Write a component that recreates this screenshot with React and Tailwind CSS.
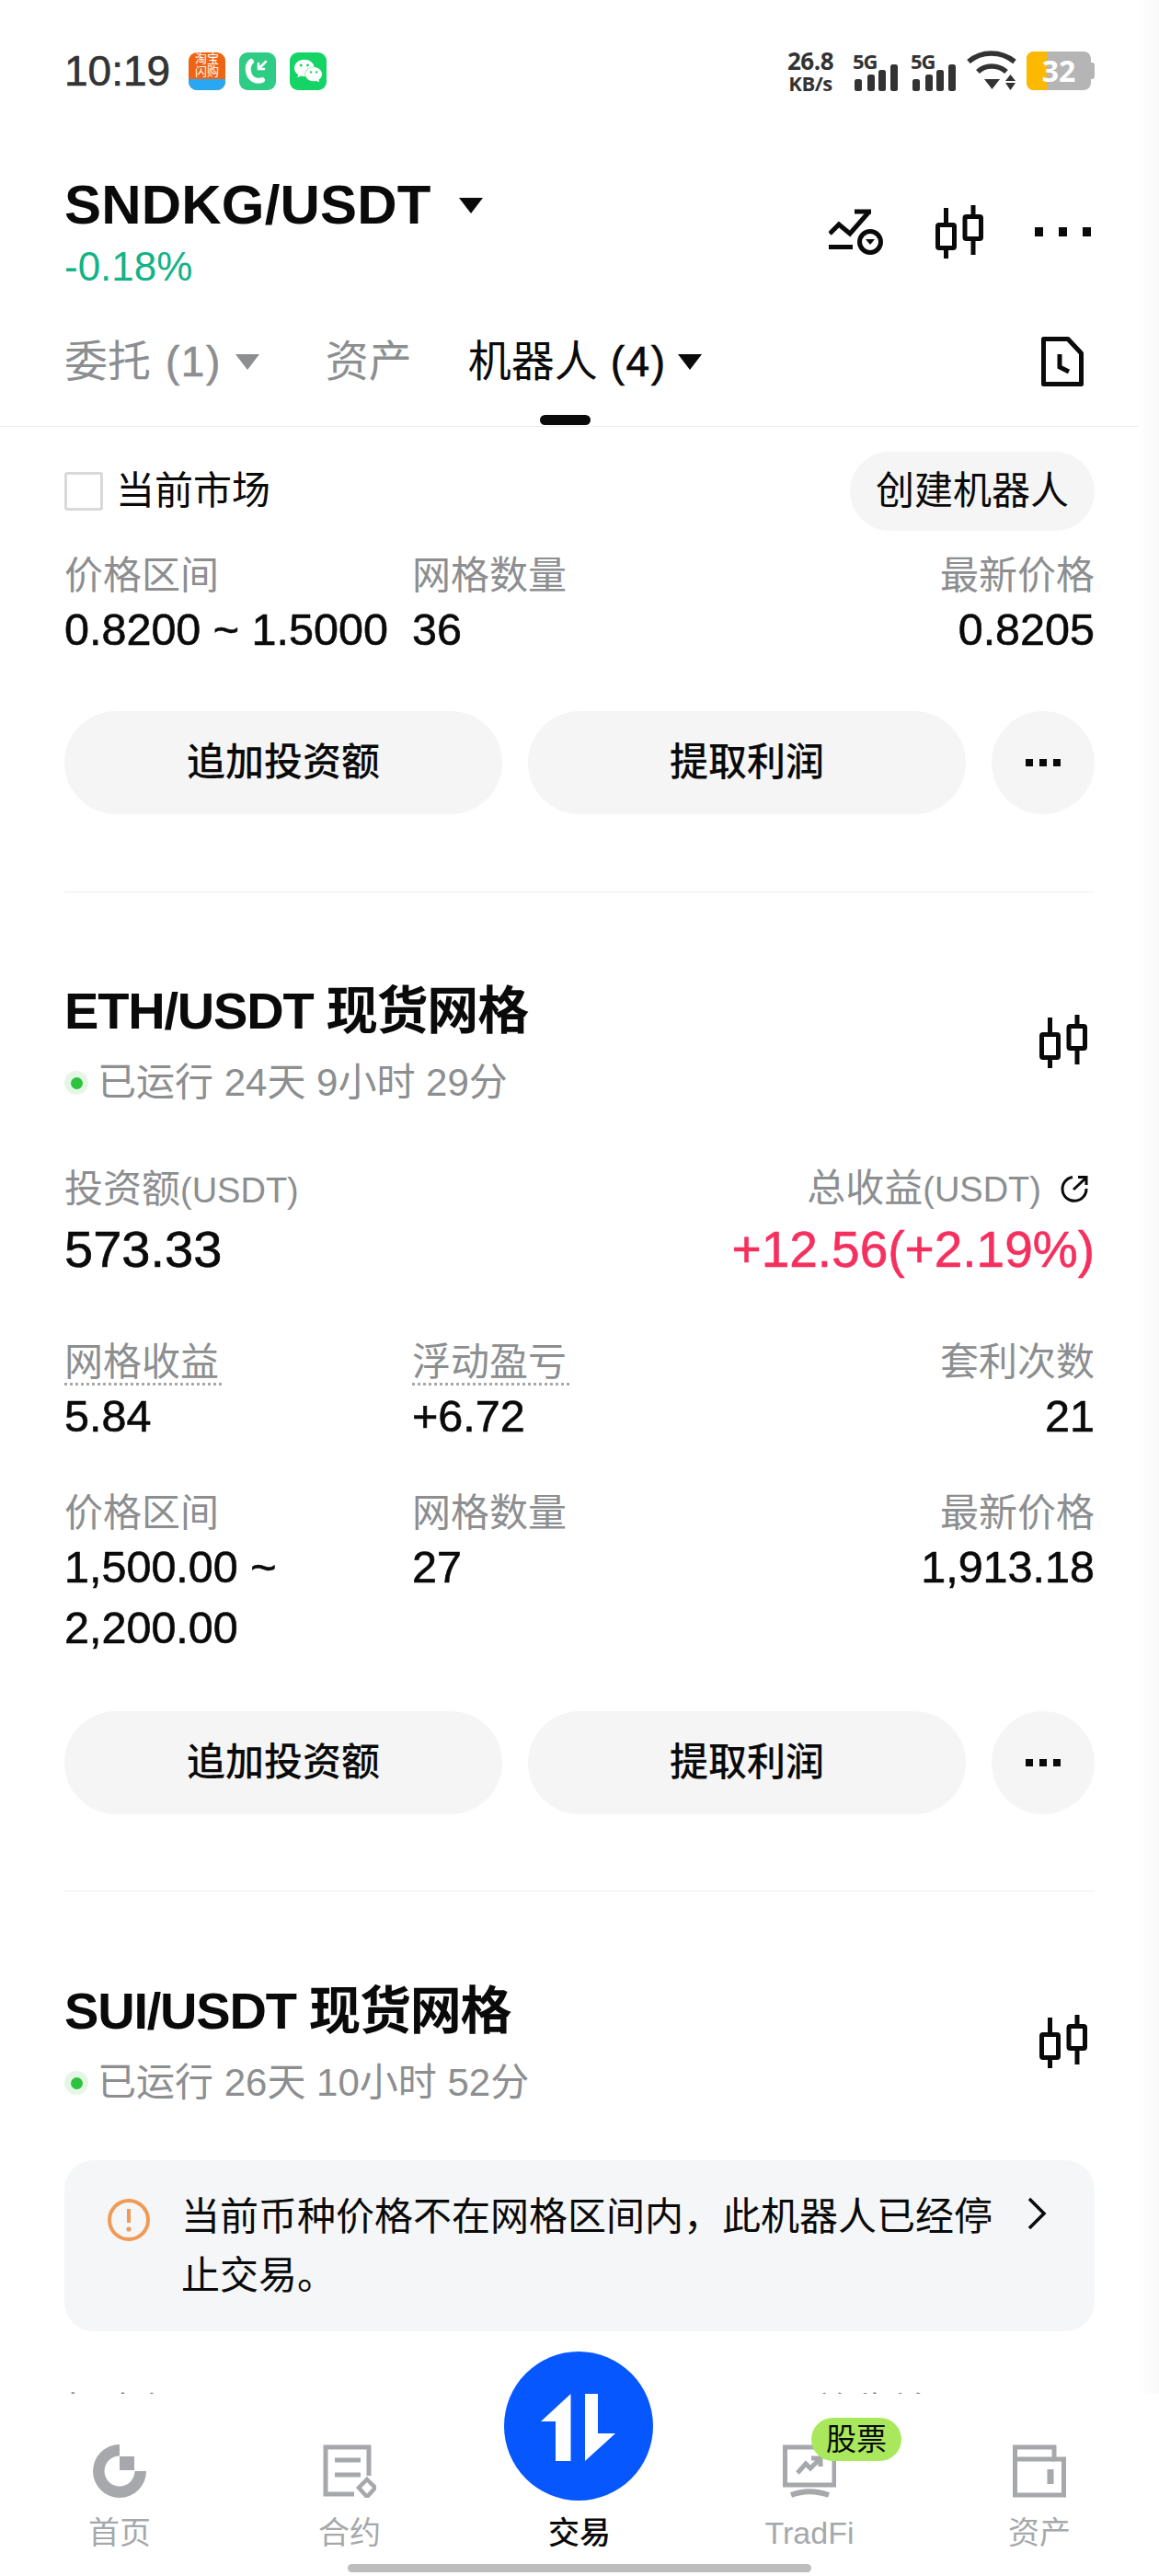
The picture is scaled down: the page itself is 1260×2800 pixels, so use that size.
import React from 'react';
import { SiWechat } from 'react-icons/si';

const FONT = "font-['Liberation_Sans','Noto_Sans_CJK_SC',sans-serif]";
// the reference's latin digits are a touch heavier than Liberation regular
const HEAVY = '[-webkit-text-stroke:0.6px_currentColor]';

function Candles({ className }) {
  return (
    <svg className={className} width="52" height="58" viewBox="0 0 52 58" fill="none" stroke="#0a0a0a" strokeWidth="5">
      <rect x="2.5" y="21.5" width="18" height="25" rx="1.5" />
      <path d="M11.5 3V19M11.5 49V58" />
      <rect x="32" y="12.5" width="17.5" height="24" rx="1.5" />
      <path d="M41 0V10M41 39V54" />
    </svg>
  );
}

function Dots() {
  return (
    <div className="flex gap-[7px]">
      <i className="block w-[8px] h-[8px] bg-[#0a0a0a]" />
      <i className="block w-[8px] h-[8px] bg-[#0a0a0a]" />
      <i className="block w-[8px] h-[8px] bg-[#0a0a0a]" />
    </div>
  );
}

function Signal() {
  return (
    <div className="relative w-[50px] h-[44px]">
      <span className="absolute left-0 top-0 text-[22px] leading-[22px] font-bold text-[#333] font-['Open_Sans',sans-serif] tracking-[-1px]">5G</span>
      <svg className="absolute left-[2px] top-0" width="48" height="44" viewBox="0 0 48 44" fill="#333">
        <rect x="0" y="31" width="8" height="13" rx="2.5" />
        <rect x="14" y="26" width="8" height="18" rx="2.5" />
        <rect x="26" y="21" width="8" height="23" rx="2.5" />
        <rect x="39" y="15" width="8" height="29" rx="2.5" />
      </svg>
    </div>
  );
}

function StatusBar() {
  return (
    <div className="h-[154px] px-[70px] flex items-center justify-between">
      <div className="flex items-center">
        <span className={`text-[46px] leading-[46px] text-[#333] w-[135px] ${HEAVY}`}>10:19</span>
        <div className="w-[40px] h-[41px] rounded-[9px] overflow-hidden flex flex-col bg-[#ee6414]">
          <div className="h-[29px] text-[13px] leading-[14px] text-white text-center">淘宝<br />闪购</div>
          <div className="flex-1 bg-[#2aa7f2]" />
        </div>
        <div className="ml-[15px] w-[40px] h-[41px] rounded-[9px] bg-[#2ecc84] flex items-center justify-center">
          <svg width="28" height="30" viewBox="0 0 28 30" fill="none" stroke="#fff" strokeLinecap="round">
            <path d="M7 5C2 9 3 20 9 24c3 2 7 2 10 1" strokeWidth="6" />
            <path d="M23 5L15 13M15 7V13H21" strokeWidth="2.5" />
          </svg>
        </div>
        <div className="ml-[15px] w-[40px] h-[41px] rounded-[9px] bg-[#14d465] flex items-center justify-center">
          <SiWechat className="text-white text-[30px]" />
        </div>
      </div>
      <div className="flex items-center">
        <div className="text-center text-[#333] font-bold font-['Open_Sans',sans-serif]">
          <div className="text-[26px] leading-[26px] tracking-[-0.5px]">26.8</div>
          <div className="text-[22px] leading-[22px] tracking-[-0.5px]">KB/s</div>
        </div>
        <div className="ml-[21px]"><Signal /></div>
        <div className="ml-[13px]"><Signal /></div>
        <svg className="ml-[11px]" width="56" height="44" viewBox="0 0 56 44" fill="none" stroke="#333" strokeWidth="5.5">
          <path d="M2 12C16 0 37 0 52 12" />
          <path d="M12 23C20 15 34 15 43 23" />
          <path d="M19 31H36L27.5 42Z" fill="#333" stroke="none" />
          <path d="M42 33L47.5 26L53 33ZM42 35H53L47.5 43Z" fill="#333" stroke="none" />
        </svg>
        <div className="ml-[9px] w-[70px] h-[42px] rounded-[8px] bg-[#b5b5b5] relative flex items-center justify-center">
          <i className="absolute left-0 top-0 bottom-0 w-[22px] rounded-l-[8px] bg-[#fdb900]" />
          <span className="relative text-white text-[32px] leading-[42px] font-bold font-['Open_Sans',sans-serif]">32</span>
        </div>
        <i className="block w-[4px] h-[18px] bg-[#b5b5b5] rounded-r-[3px]" />
      </div>
    </div>
  );
}

function Header() {
  return (
    <div className="relative border-b border-[#eeeeee] h-[310px]">
      <div className="pl-[70px] pr-[74px] pt-[39px] flex justify-between">
        <div>
          <div className="flex items-center">
            <span className="text-[60px] leading-[60px] font-bold text-[#0a0a0a] tracking-[0.2px]">SNDKG/USDT</span>
            <i className="ml-[30px] w-0 h-0 border-x-[13px] border-x-transparent border-t-[17px] border-t-[#0a0a0a]" />
          </div>
          <div className="mt-[17px] text-[44px] leading-[40px] text-[#13b386]">-0.18%</div>
        </div>
        <div className="flex items-start pt-[30px]">
          <svg className="mt-[4px]" width="60" height="50" viewBox="0 0 60 50" fill="none" stroke="#0a0a0a" strokeWidth="5">
            <path d="M1 27L11 17L23 27L44 3" />
            <path d="M28 3H46" />
            <path d="M0 41.5H26" />
            <circle cx="45" cy="36" r="11.5" />
            <path d="M40 33H50L45 39Z" fill="#0a0a0a" stroke="none" />
          </svg>
          <Candles className="ml-[56px]" />
          <div className="ml-[56px] mt-[24px] flex gap-[17px]">
            <i className="block w-[9px] h-[10px] bg-[#0a0a0a]" />
            <i className="block w-[9px] h-[10px] bg-[#0a0a0a]" />
            <i className="block w-[9px] h-[10px] bg-[#0a0a0a]" />
          </div>
        </div>
      </div>
      <div className="absolute left-[70px] right-[82px] top-[209px] flex items-center h-[60px] text-[47px] leading-[60px]">
        <span className="text-[#8c8e90]">委托</span>
        <span className={`ml-[16px] text-[#8c8e90] text-[46px] tracking-[1.5px] ${HEAVY}`}>(1)</span>
        <i className="ml-[15px] w-0 h-0 border-x-[13px] border-x-transparent border-t-[17px] border-t-[#8c8e90]" />
        <span className="ml-[72px] text-[#8c8e90]">资产</span>
        <span className="ml-[61px] text-[#0a0a0a]">机器人</span>
        <span className={`ml-[14px] text-[#0a0a0a] text-[46px] tracking-[1.5px] ${HEAVY}`}>(4)</span>
        <i className="ml-[13px] w-0 h-0 border-x-[13px] border-x-transparent border-t-[17px] border-t-[#0a0a0a]" />
        <svg className="ml-auto" width="46" height="54" viewBox="0 0 46 54" fill="none" stroke="#0a0a0a" strokeWidth="5">
          <path d="M2.5 2.5H29L43.5 18V51.5H2.5Z" strokeLinejoin="round" />
          <path d="M20 19V33L30 38" />
        </svg>
      </div>
      <i className="absolute left-[587px] top-[297px] w-[55px] h-[11px] rounded-full bg-[#0a0a0a]" />
    </div>
  );
}

function Stat({ label, value, right, dotted }) {
  return (
    <div className={right ? 'text-right' : ''}>
      <div className="h-[50px]">
        <span className={`inline-block text-[42px] leading-[52px] text-[#8c8e90] ${dotted ? 'w-[171px] h-[51px] border-b-[3px] border-dotted border-[#a8a8a8]' : ''}`}>{label}</span>
      </div>
      <div className={`mt-[1px] text-[48.5px] leading-[66px] text-[#0a0a0a] ${HEAVY}`}>{value}</div>
    </div>
  );
}

function Actions() {
  return (
    <div className="flex gap-[28px] text-[42px] leading-[50px] font-medium text-[#0a0a0a]">
      <div className="w-[476px] h-[112px] rounded-full bg-[#f5f5f5] flex items-center justify-center">追加投资额</div>
      <div className="w-[476px] h-[112px] rounded-full bg-[#f5f5f5] flex items-center justify-center">提取利润</div>
      <div className="w-[112px] h-[112px] rounded-full bg-[#f5f5f5] flex items-center justify-center"><Dots /></div>
    </div>
  );
}

function BotTitle({ name, runtime }) {
  return (
    <div className="flex justify-between">
      <div>
        <div className="text-[56px] leading-[66px] font-bold text-[#0a0a0a] tracking-[-1.2px]">{name}</div>
        <div className="mt-[20px] flex items-center h-[50px]">
          <span className="w-[26px] h-[26px] rounded-full bg-[#e6f6e6] flex items-center justify-center">
            <i className="block w-[13px] h-[13px] rounded-full bg-[#2dc33c]" />
          </span>
          <span className="ml-[10px] text-[42px] leading-[52px] text-[#8c8e90]">{runtime}</span>
        </div>
      </div>
      <Candles className="mt-[37px] mr-[8px]" />
    </div>
  );
}

function Divider() {
  return <div className="h-px bg-[#f0f0f0]" />;
}

const ROW = 'grid grid-cols-[378px_1fr_auto]';

export default function App() {
  return (
    <div className={`relative w-[1260px] h-[2800px] overflow-hidden bg-white ${FONT}`}>
      <StatusBar />
      <Header />

      <div className="px-[70px]">
        <div className="mt-[27px] h-[86px] flex items-center justify-between">
          <div className="flex items-center">
            <i className="block w-[42px] h-[42px] rounded-[3px] border-[3px] border-[#d9d9d9]" />
            <span className="ml-[14px] text-[42px] leading-[54px] text-[#0a0a0a]">当前市场</span>
          </div>
          <div className="w-[266px] h-[86px] rounded-full bg-[#f5f5f5] flex items-center justify-center text-[42px] leading-[50px] text-[#0a0a0a]">创建机器人</div>
        </div>

        <div className={`mt-[23px] ${ROW}`}>
          <Stat label="价格区间" value="0.8200 ~ 1.5000" />
          <Stat label="网格数量" value="36" />
          <Stat label="最新价格" value="0.8205" right />
        </div>
        <div className="mt-[56px]"><Actions /></div>
        <div className="mt-[84px]"><Divider /></div>

        <div className="mt-[96px]">
          <BotTitle name="ETH/USDT 现货网格" runtime="已运行 24天 9小时 29分" />
        </div>
        <div className="mt-[65px] flex justify-between">
          <div>
            <div className="text-[42px] leading-[52px] h-[50px] text-[#8c8e90]">投资额<span className="text-[38px]">(USDT)</span></div>
            <div className={`mt-[8px] text-[56px] leading-[66px] text-[#0a0a0a] ${HEAVY}`}>573.33</div>
          </div>
          <div className="text-right">
            <div className="flex items-center justify-end h-[50px]">
              <span className="text-[42px] leading-[52px] text-[#8c8e90]">总收益<span className="text-[38px]">(USDT)</span></span>
              <svg className="ml-[20px] mr-[6px]" width="32" height="32" viewBox="0 0 32 32" fill="none" stroke="#0a0a0a" strokeWidth="3">
                <path d="M14 3.5A13 13 0 1 0 29 16" />
                <path d="M15 17L29 4M20 3.5H29V12" />
              </svg>
            </div>
            <div className={`mt-[8px] text-[55px] leading-[66px] text-[#f5305f] ${HEAVY}`}>+12.56(+2.19%)</div>
          </div>
        </div>
        <div className={`mt-[64px] ${ROW}`}>
          <Stat label="网格收益" value="5.84" dotted />
          <Stat label="浮动盈亏" value="+6.72" dotted />
          <Stat label="套利次数" value="21" right />
        </div>
        <div className={`mt-[47px] ${ROW}`}>
          <Stat label="价格区间" value={<>1,500.00 ~<br />2,200.00</>} />
          <Stat label="网格数量" value="27" />
          <Stat label="最新价格" value="1,913.18" right />
        </div>
        <div className="mt-[58px]"><Actions /></div>
        <div className="mt-[83px]"><Divider /></div>

        <div className="mt-[97px]">
          <BotTitle name="SUI/USDT 现货网格" runtime="已运行 26天 10小时 52分" />
        </div>
        <div className="mt-[59px] h-[186px] rounded-[32px] bg-[#f4f6f7] pl-[127px] pr-[52px] pt-[30px] relative text-[42px] leading-[64px] text-[#0a0a0a]">
          <svg className="absolute left-[47px] top-[42px]" width="46" height="46" viewBox="0 0 46 46" fill="none">
            <circle cx="23" cy="23" r="21" stroke="#f09a56" strokeWidth="4" />
            <path d="M23 11V26" stroke="#f09a56" strokeWidth="4" />
            <circle cx="23" cy="33" r="2.6" fill="#f09a56" />
          </svg>
          <div className="w-[900px]">当前币种价格不在网格区间内，此机器人已经停止交易。</div>
          <svg className="absolute left-[1046px] top-[40px]" width="22" height="36" viewBox="0 0 22 36" fill="none" stroke="#0a0a0a" strokeWidth="3.5">
            <path d="M3 2L19 18L3 34" />
          </svg>
        </div>
        <div className="mt-[63px] flex justify-between text-[42px] leading-[50px] text-[#8c8e90]">
          <span>投资额<span className="text-[38px]">(USDT)</span></span>
          <span className="mr-[52px]">总收益<span className="text-[38px]">(USDT)</span></span>
        </div>
      </div>

      {/* right edge shade */}
      <div className="absolute right-0 top-0 h-[2602px] w-[22px] bg-gradient-to-r from-white to-[#f9f9f9]" />

      {/* bottom tab bar sits over the scrolling list */}
      <div className="absolute left-0 right-0 bottom-0 h-[198px] bg-white px-[5px] grid grid-cols-5 text-[34px] leading-[40px] text-[#a6a8ab]">
        <div className="pt-[55px] flex flex-col items-center">
          <svg width="58" height="58" viewBox="0 0 58 58" fill="#a6a8ab">
            <path d="M29 0A29 29 0 1 0 58 29H45.5A16.5 16.5 0 1 1 29 12.5Z" />
            <rect x="29" y="13" width="16" height="15" />
          </svg>
          <span className="mt-[18px]">首页</span>
        </div>
        <div className="pt-[55px] flex flex-col items-center">
          <svg width="58" height="58" viewBox="0 0 58 58" fill="none" stroke="#a6a8ab" strokeWidth="5">
            <path d="M34 54H3V3H50V34" />
            <path d="M13 17H41M13 33H41" />
            <path d="M48 38L57 47L48 57L39 47Z" strokeWidth="4.5" />
          </svg>
          <span className="mt-[18px]">合约</span>
        </div>
        <div className="relative pt-[113px] flex flex-col items-center text-[#0a0a0a] font-medium">
          <div className="absolute left-[43px] -top-[46px] w-[162px] h-[162px] rounded-full bg-[#0757ff] flex items-center justify-center">
            <svg width="162" height="162" viewBox="0 0 162 162" fill="#fff">
              <path d="M72.5 46L40 76H56V119H72.5Z" />
              <path d="M88 46H102V89H121L88 119Z" />
            </svg>
          </div>
          <span className="mt-[18px]">交易</span>
        </div>
        <div className="relative pt-[55px] flex flex-col items-center">
          <svg width="58" height="58" viewBox="0 0 58 58" fill="none" stroke="#a6a8ab" strokeWidth="5">
            <path d="M2.5 3H56V44H2.5Z" />
            <path d="M9 55C22 50 36 50 50 55" strokeWidth="6" />
            <path d="M16 31L25 21L30 26L40 16M31 15H41V24" strokeWidth="5" />
          </svg>
          <span className="mt-[18px]">TradFi</span>
          <span className="absolute left-[127px] top-[26px] w-[98px] h-[47px] rounded-full bg-[#a9e85c] text-[#0a0a0a] text-[33px] leading-[47px] text-center">股票</span>
        </div>
        <div className="pt-[55px] flex flex-col items-center">
          <svg width="58" height="58" viewBox="0 0 58 58" fill="none" stroke="#a6a8ab" strokeWidth="5">
            <path d="M2.5 3H45V16H55.5V55H2.5Z" />
            <path d="M3 16H46" />
            <path d="M41 27V43" strokeWidth="7" />
          </svg>
          <span className="mt-[18px]">资产</span>
        </div>
      </div>

      <i className="absolute left-[378px] bottom-[4px] w-[504px] h-[9px] rounded-full bg-[#bdbdbd]" />
    </div>
  );
}
